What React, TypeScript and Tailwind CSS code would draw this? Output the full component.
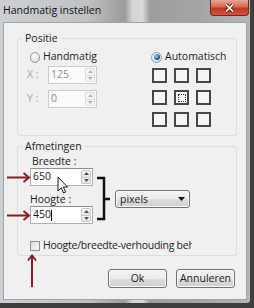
import { ReactNode } from "react";

// ==========================
// SMALL PIECES
// ==========================

const Spinner = ({ disabled }: { disabled?: boolean }) => {
  const box = disabled
    ? "border-[#dcdcdc] bg-[#f6f6f6]"
    : "border-[#c6c6c6] bg-[linear-gradient(#fafafa,#e4e4e4)]";
  const fill = disabled ? "#b4b4b4" : "#505050";
  return (
    <div className="flex flex-col w-[10px] py-[1px] mr-[1px] gap-0">
      <div className={`flex-1 flex items-center justify-center border rounded-t-[2px] ${box}`}>
        <svg width="5" height="3" viewBox="0 0 5 3">
          <path d="M0 3 L2.5 0 L5 3Z" fill={fill} />
        </svg>
      </div>
      <div className={`flex-1 flex items-center justify-center border border-t-0 rounded-b-[2px] ${box}`}>
        <svg width="5" height="3" viewBox="0 0 5 3">
          <path d="M0 0 L2.5 3 L5 0Z" fill={fill} />
        </svg>
      </div>
    </div>
  );
};

const NumberBox = ({
  value,
  width,
  disabled,
  children,
}: {
  value: string;
  width: string;
  disabled?: boolean;
  children?: ReactNode;
}) => (
  <div
    className={`relative flex items-stretch h-[18px] border ${width} ${
      disabled
        ? "border-[#c9cdd2] bg-[#fbfbfb]"
        : "border-[#abadb3] border-t-[#8c9097] bg-white"
    }`}
  >
    <span
      className={`flex-1 flex items-center pl-[2px] ${
        disabled ? "text-[#8a8f96]" : "text-[#1a1a1a]"
      }`}
    >
      {value}
    </span>
    <Spinner disabled={disabled} />
    {children}
  </div>
);

const Radio = ({ checked, label }: { checked?: boolean; label: string }) => (
  <div className="flex items-center gap-[3px] h-[14px]">
    <span className="w-[11px] h-[11px] rounded-full border border-[#9a9a9a] bg-[radial-gradient(circle_at_40%_35%,#ffffff,#d4d4d4)] flex items-center justify-center">
      {checked && (
        <span className="w-[6px] h-[6px] rounded-full bg-[radial-gradient(circle_at_35%_35%,#9fd8f8,#1d5f98_60%,#0d3760)]" />
      )}
    </span>
    <span>{label}</span>
  </div>
);

const Square = ({ focused }: { focused?: boolean }) => (
  <div className="w-[15px] h-[15px] border-2 border-[#474747] bg-[#f5f5f5] flex items-center justify-center">
    {focused && <div className="w-[8px] h-[8px] border border-dotted border-[#333]" />}
  </div>
);

const WinButton = ({ label }: { label: string }) => (
  <button className="w-[59px] h-[19px] rounded-[3px] border border-[#707070] bg-[linear-gradient(#f3f3f3_0%,#ebebeb_50%,#dddddd_51%,#cfcfcf_100%)] shadow-[inset_0_0_0_1px_#fbfbfb] text-[#1a1a1a] leading-[17px]">
    {label}
  </button>
);

const RedArrowRight = () => (
  <svg className="absolute -left-[24px] top-[3px]" width="24" height="11" viewBox="0 0 24 11">
    <path d="M0 5.5 L22 5.5" stroke="#8b1d1d" strokeWidth="2" />
    <path d="M16.5 1 L22 5.5 L16.5 10" stroke="#8b1d1d" strokeWidth="2" fill="none" />
  </svg>
);

// ==========================
// APP
// ==========================

const App = () => {
  return (
    <div className="w-[254px] h-[308px] overflow-hidden bg-[#3e3e3e] font-['Open_Sans',sans-serif] text-[10.5px] text-[#1e1e1e]">
      {/* WINDOW */}
      <div className="w-[250px] h-[303px] flex flex-col rounded-br-[3px] bg-[linear-gradient(90deg,#cdd0d3_0%,#bfc1c3_35%,#9a9b9c_50%,#d4d5d6_53%,#d9d9d9_57%,#9c9d9e_60%,#a4a5a6_80%,#b3b5b7_100%)]">
        {/* TITLE BAR */}
        <div className="h-[22px] flex items-start">
          <span className="pl-[3px] pt-[3px] leading-[15px] text-[#111]">Handmatig instellen</span>
          <div className="ml-auto mr-[1px] w-[39px] h-[16px] rounded-b-[4px] border border-t-0 border-[#6b2a22] bg-[linear-gradient(#e9a598_0%,#d66b57_45%,#c1371f_55%,#d2563c_100%)] flex items-center justify-center">
            <svg width="11" height="10" viewBox="0 0 11 10">
              <path d="M2 1.5 L9 8.5 M9 1.5 L2 8.5" stroke="#5a1b12" strokeWidth="3.2" />
              <path d="M2 1.5 L9 8.5 M9 1.5 L2 8.5" stroke="#ffffff" strokeWidth="1.7" />
            </svg>
          </div>
        </div>

        {/* CONTENT */}
        <div className="flex-1 mx-[3px] mb-[3px] border border-[#9ea3a8] bg-[#f0f0f0] flex flex-col">
          {/* POSITIE */}
          <fieldset className="ml-[13px] mt-[8px] w-[220px] h-[105px] border border-[#d5dfe5] rounded-[3px] p-0">
            <legend className="ml-[5px] px-[2px] leading-[15px]">Positie</legend>
            <div className="flex pl-[9px]">
              <div className="flex flex-col w-[70px]">
                <div className="mt-[4px] pl-[3px]">
                  <Radio label="Handmatig" />
                </div>
                <div className="mt-[2px] flex items-center">
                  <span className="w-[21px] text-[#a6a6a6]">X :</span>
                  <NumberBox value="125" width="w-[49px]" disabled />
                </div>
                <div className="mt-[6px] flex items-center">
                  <span className="w-[21px] text-[#a6a6a6]">Y :</span>
                  <NumberBox value="0" width="w-[49px]" disabled />
                </div>
              </div>
              <div className="ml-[54px] flex flex-col">
                <div className="mt-[4px]">
                  <Radio label="Automatisch" checked />
                </div>
                <div className="mt-[4px] pl-[1px] grid grid-cols-3 gap-[7px] w-[60px]">
                  <Square />
                  <Square />
                  <Square />
                  <Square />
                  <Square focused />
                  <Square />
                  <Square />
                  <Square />
                  <Square />
                </div>
              </div>
            </div>
          </fieldset>

          {/* AFMETINGEN */}
          <fieldset className="ml-[13px] mt-[3px] w-[220px] h-[117px] border border-[#d5dfe5] rounded-[3px] p-0">
            <legend className="ml-[5px] px-[2px] leading-[15px]">Afmetingen</legend>
            <div className="flex flex-col pl-[12px]">
              <div className="flex items-start">
                <div className="flex flex-col w-[63px]">
                  <span className="mt-[1px] pl-[2px] leading-[13px]">Breedte :</span>
                  <NumberBox value="650" width="w-[63px]">
                    <RedArrowRight />
                    <svg className="absolute left-[26px] top-[7px]" width="11" height="18" viewBox="0 0 11 18">
                      <path d="M1 1 L1 15 L4.3 11.8 L6.6 17 L8.6 16.1 L6.4 11 L10.5 11 Z" fill="#ffffff" stroke="#1a1a1a" strokeWidth="1" strokeLinejoin="round" />
                    </svg>
                  </NumberBox>
                  <span className="mt-[7px] leading-[13px]">Hoogte :</span>
                  <NumberBox value="450" width="w-[63px]">
                    <RedArrowRight />
                    <span className="absolute left-[20px] top-[3px] w-[1px] h-[11px] bg-[#111]" />
                  </NumberBox>
                </div>
                <svg className="ml-[1px]" width="18" height="72" viewBox="0 0 18 72">
                  <path d="M3 24 L10 24 L10 65 L3 65" stroke="#111" strokeWidth="2.5" fill="none" />
                  <path d="M10 45 L16 45" stroke="#111" strokeWidth="2.5" />
                </svg>
                <div className="ml-[3px] mt-[36px] w-[75px] h-[18px] rounded-[3px] border border-[#707070] bg-[linear-gradient(#f3f3f3_0%,#ebebeb_50%,#dddddd_51%,#cfcfcf_100%)] shadow-[inset_0_0_0_1px_#fbfbfb] flex items-center pl-[4px] pr-[4px]">
                  <span className="flex-1 leading-[16px]">pixels</span>
                  <svg width="7" height="4" viewBox="0 0 7 4">
                    <path d="M0 0 L7 0 L3.5 4Z" fill="#111" />
                  </svg>
                </div>
              </div>
              <div className="mt-[12px] flex items-center">
                <span className="relative w-[10px] h-[10px] border border-[#8f8f8f] bg-[linear-gradient(135deg,#dcdcdc,#f8f8f8)]">
                  <svg className="absolute -left-[4px] top-[12px]" width="10" height="33" viewBox="0 0 10 33">
                    <path d="M5 1.5 L5 33" stroke="#8b1d1d" strokeWidth="2" />
                    <path d="M1 6.5 L5 1.5 L9 6.5" stroke="#8b1d1d" strokeWidth="2" fill="none" />
                  </svg>
                </span>
                <span className="ml-[3px] w-[149px] overflow-hidden whitespace-nowrap tracking-[-0.25px]">
                  Hoogte/breedte-verhouding behouden
                </span>
              </div>
            </div>
          </fieldset>

          {/* BUTTONS */}
          <div className="mt-[13px] pr-[11px] flex justify-end gap-[9px]">
            <WinButton label="Ok" />
            <WinButton label="Annuleren" />
          </div>
        </div>
      </div>
    </div>
  );
};

export default App;
